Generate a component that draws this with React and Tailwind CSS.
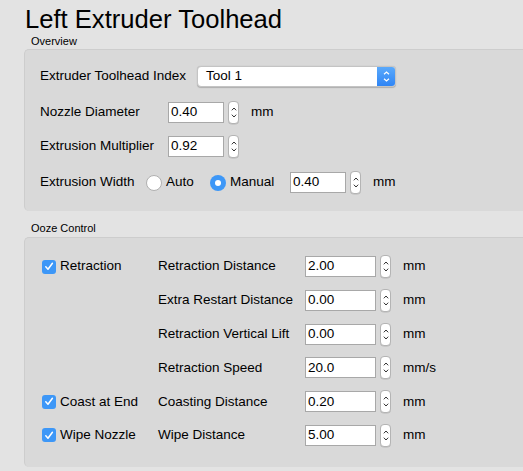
import React from "react";

const font = { fontFamily: '"Liberation Sans", Arial, sans-serif' };

function Stepper() {
  return (
    <div className="w-[11px] h-[23px] rounded-[4px] border border-[#b4b4b4] bg-white flex flex-col items-center justify-center gap-[3px] shadow-[0_0.5px_0.5px_rgba(0,0,0,0.15)]">
      <svg width="6" height="4" viewBox="0 0 6 4"><path d="M0.8 3.3 L3 1 L5.2 3.3" fill="none" stroke="#333" strokeWidth="1" /></svg>
      <svg width="6" height="4" viewBox="0 0 6 4"><path d="M0.8 0.7 L3 3 L5.2 0.7" fill="none" stroke="#333" strokeWidth="1" /></svg>
    </div>
  );
}

function Field({ value, w = "w-[56px]" }) {
  return (
    <div className={`${w} h-[21px] bg-white border border-[#a8a8a8] flex items-center pl-[2px] text-[13.5px] text-black`}>
      {value}
    </div>
  );
}

function NumInput({ value, w, unit, unitGap = "ml-[12px]" }) {
  return (
    <div className="flex items-center">
      <Field value={value} w={w} />
      <div className="ml-[4px]"><Stepper /></div>
      {unit && <span className={`${unitGap} text-[13.5px]`}>{unit}</span>}
    </div>
  );
}

function Check({ label }) {
  return (
    <div className="flex items-center">
      <div className="w-[14px] h-[14px] rounded-[3px] bg-[#3d97f7] flex items-center justify-center">
        <svg width="10" height="9" viewBox="0 0 10 9"><path d="M1.8 4.8 L4 7.2 L8.4 1.3" fill="none" stroke="white" strokeWidth="1.5" strokeLinecap="round" strokeLinejoin="round" /></svg>
      </div>
      <span className="ml-[4px] text-[13.5px]">{label}</span>
    </div>
  );
}

function OozeRow({ check, label, value, unit }) {
  return (
    <div className="flex items-center h-[21px]">
      <div className="w-[116px]">{check && <Check label={check} />}</div>
      <div className="w-[147px] text-[13.5px]">{label}</div>
      <NumInput value={value} w="w-[71px]" unit={unit} unitGap="ml-[12px]" />
    </div>
  );
}

export default function App() {
  return (
    <div style={font} className="w-[523px] h-[471px] bg-[#e3e3e3] overflow-hidden text-black pl-[24px]">
      <div className="pt-[7px] pl-[1px] text-[25.6px] leading-[25px] text-black">Left Extruder Toolhead</div>
      <div className="mt-[3px] pl-[7px] text-[11px] leading-[13px] text-black">Overview</div>
      <div className="mt-[1px] w-[530px] bg-[#d9d9d9] border-t border-l border-[#cdcdcd] rounded-l-[5px] pl-[15px] pt-[16px] pb-[17px] flex flex-col">
        <div className="flex items-center h-[21px]">
          <span className="w-[157px] text-[13.5px]">Extruder Toolhead Index</span>
          <div className="w-[199px] h-[21px] rounded-[4px] bg-white border border-[#c4c4c4] flex items-center shadow-[0_0.5px_1px_rgba(0,0,0,0.2)] overflow-hidden">
            <span className="flex-1 pl-[8px] text-[13.5px] text-black">Tool 1</span>
            <div className="w-[18px] h-full bg-gradient-to-b from-[#5aa9fb] to-[#2f85f5] flex flex-col items-center justify-center gap-[3px]">
              <svg width="7" height="4" viewBox="0 0 7 4"><path d="M1 3.3 L3.5 1 L6 3.3" fill="none" stroke="white" strokeWidth="1.2" /></svg>
              <svg width="7" height="4" viewBox="0 0 7 4"><path d="M1 0.7 L3.5 3 L6 0.7" fill="none" stroke="white" strokeWidth="1.2" /></svg>
            </div>
          </div>
        </div>
        <div className="flex items-center h-[23px] mt-[14px]">
          <span className="w-[128px] text-[13.5px]">Nozzle Diameter</span>
          <NumInput value="0.40" unit="mm" />
        </div>
        <div className="flex items-center h-[23px] mt-[11px]">
          <span className="w-[128px] text-[13.5px]">Extrusion Multiplier</span>
          <NumInput value="0.92" />
        </div>
        <div className="flex items-center h-[23px] mt-[13px]">
          <span className="w-[106px] text-[13.5px]">Extrusion Width</span>
          <div className="w-[16px] h-[16px] rounded-full bg-white border border-[#b0b0b0]" />
          <span className="ml-[4px] w-[44px] text-[13.5px]">Auto</span>
          <div className="w-[16px] h-[16px] rounded-full bg-[#3d97f7] flex items-center justify-center">
            <div className="w-[6px] h-[6px] rounded-full bg-white" />
          </div>
          <span className="ml-[4px] w-[60px] text-[13.5px]">Manual</span>
          <NumInput value="0.40" unit="mm" />
        </div>
      </div>
      <div className="mt-[11px] pl-[7px] text-[11px] leading-[13px] text-black">Ooze Control</div>
      <div className="mt-[2px] w-[530px] bg-[#d9d9d9] border-t border-l border-[#cdcdcd] rounded-l-[5px] pl-[17px] pt-[18px] pb-[21px] flex flex-col gap-[12.8px]">
        <OozeRow check="Retraction" label="Retraction Distance" value="2.00" unit="mm" />
        <OozeRow label="Extra Restart Distance" value="0.00" unit="mm" />
        <OozeRow label="Retraction Vertical Lift" value="0.00" unit="mm" />
        <OozeRow label="Retraction Speed" value="20.0" unit="mm/s" />
        <OozeRow check="Coast at End" label="Coasting Distance" value="0.20" unit="mm" />
        <OozeRow check="Wipe Nozzle" label="Wipe Distance" value="5.00" unit="mm" />
      </div>
    </div>
  );
}
